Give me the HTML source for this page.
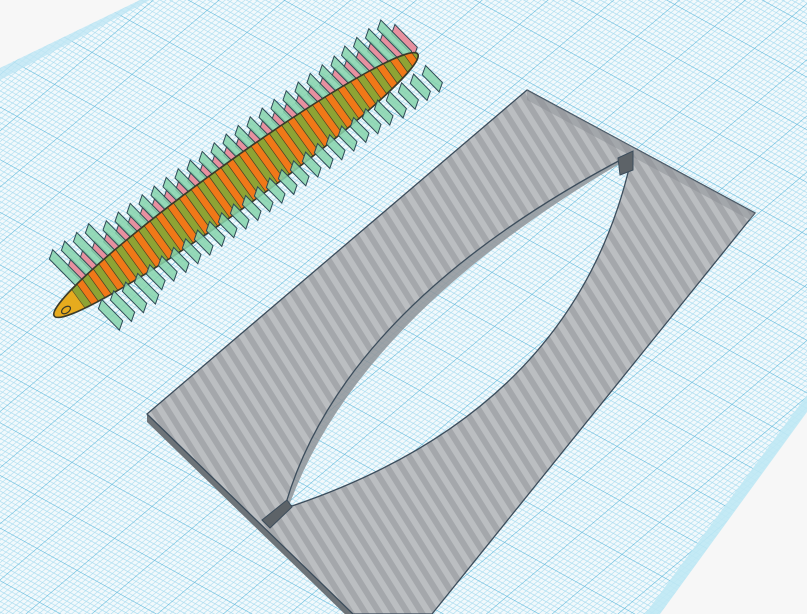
<!DOCTYPE html>
<html><head><meta charset="utf-8"><style>
html,body{margin:0;padding:0;background:#f7f7f7;overflow:hidden}
svg{display:block}
</style></head><body>
<svg id="s" width="807" height="614" viewBox="0 0 807 614" xmlns="http://www.w3.org/2000/svg">
<defs>
<pattern id="grid" width="50" height="50" patternUnits="userSpaceOnUse" patternTransform="matrix(0.8 0.44 -0.75 0.64 12 8)">
<rect width="50" height="50" fill="#f2f9fc"/>
<g stroke="#a9dcef" stroke-width="0.7">
<path d="M5 0V50M10 0V50M15 0V50M20 0V50M25 0V50M30 0V50M35 0V50M40 0V50M45 0V50M0 5H50M0 10H50M0 15H50M0 20H50M0 25H50M0 30H50M0 35H50M0 40H50M0 45H50"/>
</g>
<path d="M0 0V50M0 0H50" stroke="#5bb7da" stroke-width="1.3"/>
</pattern>
<pattern id="carbon" width="12" height="12" patternUnits="userSpaceOnUse" patternTransform="rotate(-32)">
<rect width="12" height="12" fill="#a4a7ab"/>
<rect width="6" height="12" fill="#bbbec1"/>
</pattern>
<clipPath id="bodyclip"><ellipse cx="236" cy="185" rx="224" ry="23" transform="rotate(-35.8 236 185)"/></clipPath>
</defs>
<polygon points="0,68 140,0 807,0 807,410 660,614 0,614" fill="url(#grid)"/>
<polygon points="0,68 140,0 150,0 0,80" fill="#bfe6f4" opacity="0.8"/>
<polygon points="807,395 807,412 660,614 645,614" fill="#bfe8f4" opacity="0.9"/>
<g>
<polygon points="147,414 147,422 353,622 353,614" fill="#6d7378"/>
<polygon points="527,90 755,213 432,614 353,614 147,414" fill="url(#carbon)" stroke="#3c4d5c" stroke-width="1.3"/>
<polygon points="527,90 755,213 750,220 527,100" fill="#8b9095" opacity="0.5"/>
<path d="M626,157 Q345,305 286,503 L292,506 Q575,410 631,160 Z" fill="url(#grid)"/>
<path d="M626,157 Q345,305 286,503 L290,503 Q360,315 626,160 Z" fill="#8e9398" opacity="0.85"/>
<path d="M626,157 Q345,305 286,503 M292,506 Q575,410 631,160 M286,503 L292,506" fill="none" stroke="#3c4d5c" stroke-width="1.3"/>
<polygon points="618,158 633,151 633,170 620,175" fill="#5d6368" stroke="#3c4d5c" stroke-width="1"/>
<polygon points="262,520 287,500 292,507 270,528" fill="#5d6368" stroke="#3c4d5c" stroke-width="1"/>
</g>
<g id="fins"></g>
<g id="body">
<ellipse cx="236" cy="185" rx="224" ry="23" transform="rotate(-35.8 236 185)" fill="#8ea334" stroke="#3a3a2a" stroke-width="1.5"/>
<g clip-path="url(#bodyclip)" id="stripes"></g>
<ellipse cx="236" cy="185" rx="224" ry="23" transform="rotate(-35.8 236 185)" fill="none" stroke="#3a3a2a" stroke-width="1.5"/>
<ellipse cx="66" cy="310" rx="5" ry="3" transform="rotate(-35 66 310)" fill="none" stroke="#3a3a2a" stroke-width="1.2"/>
</g>
<g id="fins2"></g>
</svg>
<script>
(function(){
var ns="http://www.w3.org/2000/svg";
var p0=[52,318],u=[0.8106,-0.5855],n=[0.5855,0.8106],f=[0.70,0.71];
var fins=document.getElementById('fins'),fins2=document.getElementById('fins2'),st=document.getElementById('stripes');
function P(a){return a.map(function(p){return p[0].toFixed(1)+','+p[1].toFixed(1)}).join(' ')}
function poly(par,pts,fill,op){var e=document.createElementNS(ns,'polygon');e.setAttribute('points',P(pts));e.setAttribute('fill',fill);if(op)e.setAttribute('fill-opacity',op);e.setAttribute('stroke','#2f4a55');e.setAttribute('stroke-width','1');par.appendChild(e);}
var SP=14.8;
for(var i=0;i<28;i++){
 var t=40+i*SP;
 var c=[p0[0]+u[0]*t,p0[1]+u[1]*t];
 var L=(i<4)?50:(i>23?44:42);
 var A=[c[0]-f[0]*L,c[1]-f[1]*L],B=[c[0]+f[0]*L,c[1]+f[1]*L];
 var sh=function(p){return [p[0]+u[0]*4,p[1]+u[1]*4-7]};
 var A2=[c[0]-f[0]*32+u[0]*7,c[1]-f[1]*32+u[1]*7],c3=[c[0]+u[0]*7,c[1]+u[1]*7];
 poly(fins,[A2,c3,sh(c3),sh(A2)],'#e7909f');
 poly(fins,[A,c,sh(c),sh(A)],'#86d3ac','0.85');
 var c2=[c[0]+f[0]*20,c[1]+f[1]*20];
 poly(fins2,[c2,B,sh(B),sh(c2)],'#86d3ac','0.85');
 var a=[c[0]-n[0]*30,c[1]-n[1]*30],b=[c[0]+n[0]*30,c[1]+n[1]*30];
 var s=document.createElementNS(ns,'polygon');
 s.setAttribute('points',P([a,b,[b[0]+u[0]*7.4,b[1]+u[1]*7.4],[a[0]+u[0]*7.4,a[1]+u[1]*7.4]]));
 s.setAttribute('fill','#f07818');s.setAttribute('stroke','#4a3a20');s.setAttribute('stroke-width','0.6');
 st.appendChild(s);
 var l=document.createElementNS(ns,'line');
 l.setAttribute('x1',a[0]-u[0]*7.4);l.setAttribute('y1',a[1]-u[1]*7.4);l.setAttribute('x2',b[0]-u[0]*7.4);l.setAttribute('y2',b[1]-u[1]*7.4);
 l.setAttribute('stroke','#4a4a2a');l.setAttribute('stroke-width','0.6');st.appendChild(l);
}
var y=document.createElementNS(ns,'polygon');
var q=function(t,w){return [p0[0]+u[0]*t+n[0]*w,p0[1]+u[1]*t+n[1]*w]};
y.setAttribute('points',P([q(-10,-40),q(33,-40),q(33,40),q(-10,40)]));
y.setAttribute('fill','#e6ab1e');st.insertBefore(y,st.firstChild);
})();
</script>
</body></html>
